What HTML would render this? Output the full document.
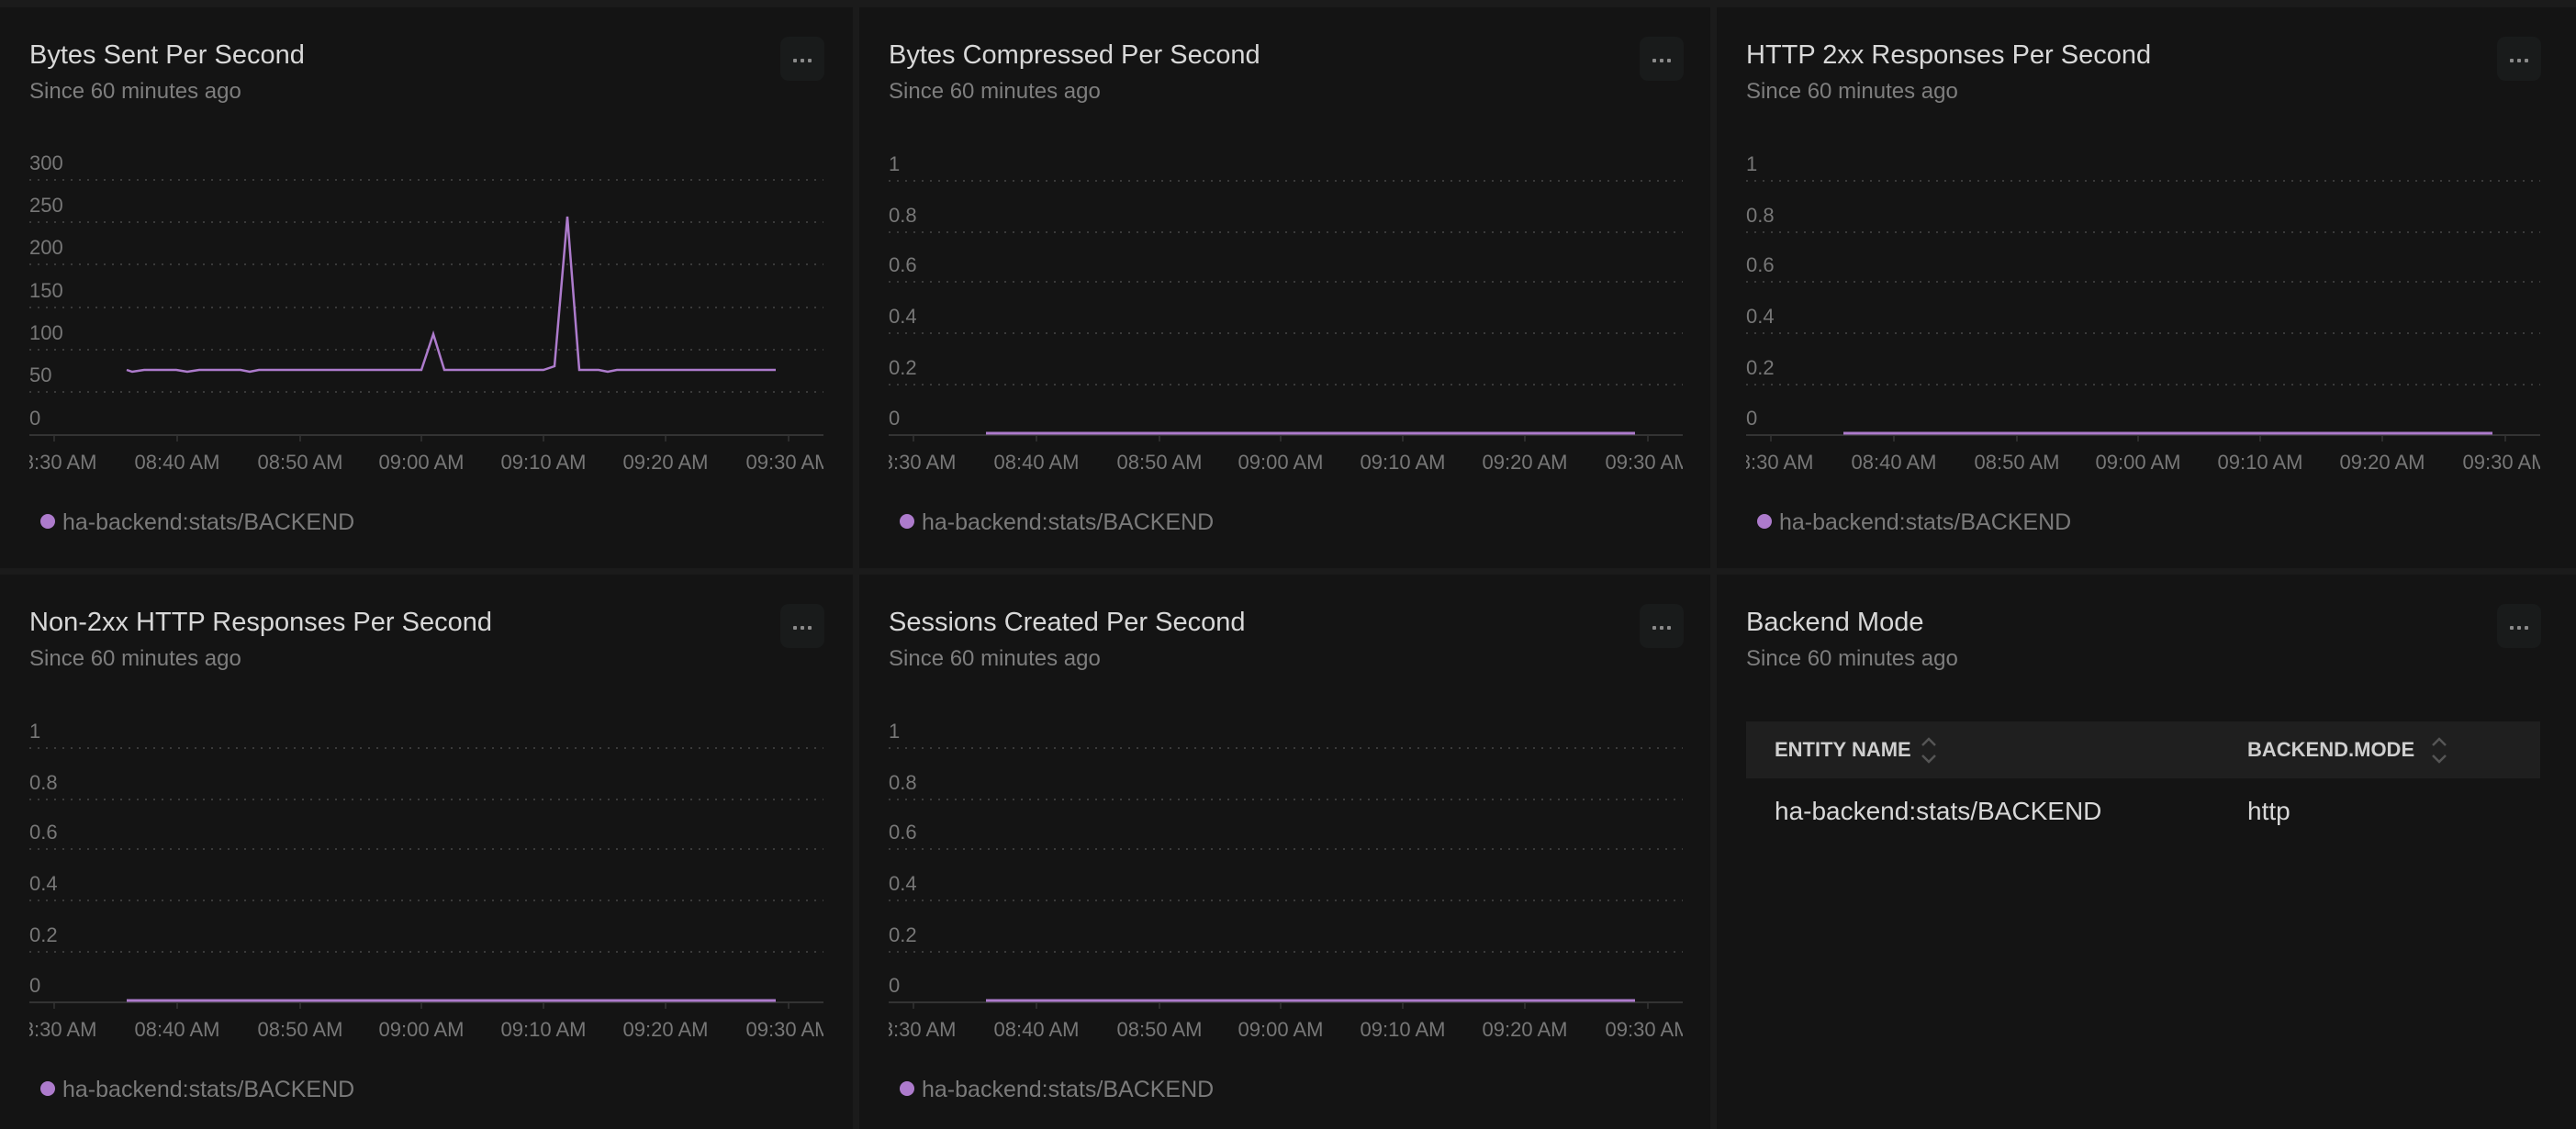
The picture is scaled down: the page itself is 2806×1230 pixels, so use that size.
<!DOCTYPE html>
<html><head><meta charset="utf-8"><style>
html,body{margin:0;padding:0;background:#1b1b1b;width:2806px;height:1230px;overflow:hidden;font-family:"Liberation Sans",sans-serif}
.p{position:absolute;background:#141414}
.t{position:absolute;left:32px;top:36px;font-size:29px;color:#d8d8d8;white-space:nowrap}
.s{position:absolute;left:32px;top:78px;font-size:24px;color:#7e7e7e;white-space:nowrap}
.m{position:absolute;left:850px;top:32px;width:48px;height:48px;border-radius:9px;background:#191b1b}
.m i{position:absolute;top:24px;width:4px;height:4px;background:#8a8a8a;border-radius:1px}
svg{position:absolute;left:0;top:0;overflow:hidden}
.lg{position:absolute;left:68px;top:547px;font-size:25px;color:#7a7a7a;white-space:nowrap}
.dot{position:absolute;left:44px;top:552px;width:16px;height:16px;border-radius:50%;background:#ad7bcc}
</style></head><body>

<div class="p" style="left:0;top:8px;width:929px;height:611px">
<div class="t">Bytes Sent Per Second</div><div class="s">Since 60 minutes ago</div>
<div class="m"><i style="left:14px"></i><i style="left:22px"></i><i style="left:30px"></i></div>
<svg width="929" height="611"><g transform="translate(32,0)">
<svg width="865" height="611"><g font-family="Liberation Sans" font-size="22" fill="#777">
<g stroke="#3a3a3a" stroke-width="2" stroke-dasharray="2 7"><line x1="0" x2="865" y1="188" y2="188"/><line x1="0" x2="865" y1="234" y2="234"/><line x1="0" x2="865" y1="280" y2="280"/><line x1="0" x2="865" y1="327" y2="327"/><line x1="0" x2="865" y1="373" y2="373"/><line x1="0" x2="865" y1="419" y2="419"/></g>
<line x1="0" x2="865" y1="466" y2="466" stroke="#333" stroke-width="2"/>
<g stroke="#2c2c2c" stroke-width="2"><line x1="27" x2="27" y1="467" y2="473"/><line x1="161" x2="161" y1="467" y2="473"/><line x1="295" x2="295" y1="467" y2="473"/><line x1="427" x2="427" y1="467" y2="473"/><line x1="560" x2="560" y1="467" y2="473"/><line x1="693" x2="693" y1="467" y2="473"/><line x1="827" x2="827" y1="467" y2="473"/></g>
<text x="0" y="177">300</text><text x="0" y="223">250</text><text x="0" y="269">200</text><text x="0" y="316">150</text><text x="0" y="362">100</text><text x="0" y="408">50</text><text x="0" y="455">0</text>
<g text-anchor="middle"><text x="27" y="503">08:30 AM</text><text x="161" y="503">08:40 AM</text><text x="295" y="503">08:50 AM</text><text x="427" y="503">09:00 AM</text><text x="560" y="503">09:10 AM</text><text x="693" y="503">09:20 AM</text><text x="827" y="503">09:30 AM</text></g>
<polyline fill="none" stroke="#ad7bcc" stroke-width="2.5" points="106,395 112,397 125,395 160,395 172,397 185,395 230,395 240,397 250,395 427,395 440,356 452,395 560,395 572,391 586,228 599,395 620,395 630,397 640,395 813,395"/>
</g></svg></g></svg>
<div class="dot"></div><div class="lg">ha-backend:stats/BACKEND</div>
</div>

<div class="p" style="left:936px;top:8px;width:927px;height:611px">
<div class="t">Bytes Compressed Per Second</div><div class="s">Since 60 minutes ago</div>
<div class="m"><i style="left:14px"></i><i style="left:22px"></i><i style="left:30px"></i></div>
<svg width="927" height="611"><g transform="translate(32,0)">
<svg width="865" height="611"><g font-family="Liberation Sans" font-size="22" fill="#777">
<g stroke="#3a3a3a" stroke-width="2" stroke-dasharray="2 7"><line x1="0" x2="865" y1="189" y2="189"/><line x1="0" x2="865" y1="245" y2="245"/><line x1="0" x2="865" y1="299" y2="299"/><line x1="0" x2="865" y1="355" y2="355"/><line x1="0" x2="865" y1="411" y2="411"/></g>
<line x1="0" x2="865" y1="466" y2="466" stroke="#333" stroke-width="2"/>
<g stroke="#2c2c2c" stroke-width="2"><line x1="27" x2="27" y1="467" y2="473"/><line x1="161" x2="161" y1="467" y2="473"/><line x1="295" x2="295" y1="467" y2="473"/><line x1="427" x2="427" y1="467" y2="473"/><line x1="560" x2="560" y1="467" y2="473"/><line x1="693" x2="693" y1="467" y2="473"/><line x1="827" x2="827" y1="467" y2="473"/></g>
<text x="0" y="178">1</text><text x="0" y="234">0.8</text><text x="0" y="288">0.6</text><text x="0" y="344">0.4</text><text x="0" y="400">0.2</text><text x="0" y="455">0</text>
<g text-anchor="middle"><text x="27" y="503">08:30 AM</text><text x="161" y="503">08:40 AM</text><text x="295" y="503">08:50 AM</text><text x="427" y="503">09:00 AM</text><text x="560" y="503">09:10 AM</text><text x="693" y="503">09:20 AM</text><text x="827" y="503">09:30 AM</text></g>
<line x1="106" x2="813" y1="464" y2="464" stroke="#ad7bcc" stroke-width="3"/>
</g></svg></g></svg>
<div class="dot"></div><div class="lg">ha-backend:stats/BACKEND</div>
</div>

<div class="p" style="left:1870px;top:8px;width:936px;height:611px">
<div class="t">HTTP 2xx Responses Per Second</div><div class="s">Since 60 minutes ago</div>
<div class="m"><i style="left:14px"></i><i style="left:22px"></i><i style="left:30px"></i></div>
<svg width="936" height="611"><g transform="translate(32,0)">
<svg width="865" height="611"><g font-family="Liberation Sans" font-size="22" fill="#777">
<g stroke="#3a3a3a" stroke-width="2" stroke-dasharray="2 7"><line x1="0" x2="865" y1="189" y2="189"/><line x1="0" x2="865" y1="245" y2="245"/><line x1="0" x2="865" y1="299" y2="299"/><line x1="0" x2="865" y1="355" y2="355"/><line x1="0" x2="865" y1="411" y2="411"/></g>
<line x1="0" x2="865" y1="466" y2="466" stroke="#333" stroke-width="2"/>
<g stroke="#2c2c2c" stroke-width="2"><line x1="27" x2="27" y1="467" y2="473"/><line x1="161" x2="161" y1="467" y2="473"/><line x1="295" x2="295" y1="467" y2="473"/><line x1="427" x2="427" y1="467" y2="473"/><line x1="560" x2="560" y1="467" y2="473"/><line x1="693" x2="693" y1="467" y2="473"/><line x1="827" x2="827" y1="467" y2="473"/></g>
<text x="0" y="178">1</text><text x="0" y="234">0.8</text><text x="0" y="288">0.6</text><text x="0" y="344">0.4</text><text x="0" y="400">0.2</text><text x="0" y="455">0</text>
<g text-anchor="middle"><text x="27" y="503">08:30 AM</text><text x="161" y="503">08:40 AM</text><text x="295" y="503">08:50 AM</text><text x="427" y="503">09:00 AM</text><text x="560" y="503">09:10 AM</text><text x="693" y="503">09:20 AM</text><text x="827" y="503">09:30 AM</text></g>
<line x1="106" x2="813" y1="464" y2="464" stroke="#ad7bcc" stroke-width="3"/>
</g></svg></g></svg>
<div class="dot"></div><div class="lg">ha-backend:stats/BACKEND</div>
</div>

<div class="p" style="left:0;top:626px;width:929px;height:604px">
<div class="t">Non-2xx HTTP Responses Per Second</div><div class="s">Since 60 minutes ago</div>
<div class="m"><i style="left:14px"></i><i style="left:22px"></i><i style="left:30px"></i></div>
<svg width="929" height="604"><g transform="translate(32,0)">
<svg width="865" height="604"><g font-family="Liberation Sans" font-size="22" fill="#777">
<g stroke="#3a3a3a" stroke-width="2" stroke-dasharray="2 7"><line x1="0" x2="865" y1="189" y2="189"/><line x1="0" x2="865" y1="245" y2="245"/><line x1="0" x2="865" y1="299" y2="299"/><line x1="0" x2="865" y1="355" y2="355"/><line x1="0" x2="865" y1="411" y2="411"/></g>
<line x1="0" x2="865" y1="466" y2="466" stroke="#333" stroke-width="2"/>
<g stroke="#2c2c2c" stroke-width="2"><line x1="27" x2="27" y1="467" y2="473"/><line x1="161" x2="161" y1="467" y2="473"/><line x1="295" x2="295" y1="467" y2="473"/><line x1="427" x2="427" y1="467" y2="473"/><line x1="560" x2="560" y1="467" y2="473"/><line x1="693" x2="693" y1="467" y2="473"/><line x1="827" x2="827" y1="467" y2="473"/></g>
<text x="0" y="178">1</text><text x="0" y="234">0.8</text><text x="0" y="288">0.6</text><text x="0" y="344">0.4</text><text x="0" y="400">0.2</text><text x="0" y="455">0</text>
<g text-anchor="middle"><text x="27" y="503">08:30 AM</text><text x="161" y="503">08:40 AM</text><text x="295" y="503">08:50 AM</text><text x="427" y="503">09:00 AM</text><text x="560" y="503">09:10 AM</text><text x="693" y="503">09:20 AM</text><text x="827" y="503">09:30 AM</text></g>
<line x1="106" x2="813" y1="464" y2="464" stroke="#ad7bcc" stroke-width="3"/>
</g></svg></g></svg>
<div class="dot"></div><div class="lg">ha-backend:stats/BACKEND</div>
</div>

<div class="p" style="left:936px;top:626px;width:927px;height:604px">
<div class="t">Sessions Created Per Second</div><div class="s">Since 60 minutes ago</div>
<div class="m"><i style="left:14px"></i><i style="left:22px"></i><i style="left:30px"></i></div>
<svg width="927" height="604"><g transform="translate(32,0)">
<svg width="865" height="604"><g font-family="Liberation Sans" font-size="22" fill="#777">
<g stroke="#3a3a3a" stroke-width="2" stroke-dasharray="2 7"><line x1="0" x2="865" y1="189" y2="189"/><line x1="0" x2="865" y1="245" y2="245"/><line x1="0" x2="865" y1="299" y2="299"/><line x1="0" x2="865" y1="355" y2="355"/><line x1="0" x2="865" y1="411" y2="411"/></g>
<line x1="0" x2="865" y1="466" y2="466" stroke="#333" stroke-width="2"/>
<g stroke="#2c2c2c" stroke-width="2"><line x1="27" x2="27" y1="467" y2="473"/><line x1="161" x2="161" y1="467" y2="473"/><line x1="295" x2="295" y1="467" y2="473"/><line x1="427" x2="427" y1="467" y2="473"/><line x1="560" x2="560" y1="467" y2="473"/><line x1="693" x2="693" y1="467" y2="473"/><line x1="827" x2="827" y1="467" y2="473"/></g>
<text x="0" y="178">1</text><text x="0" y="234">0.8</text><text x="0" y="288">0.6</text><text x="0" y="344">0.4</text><text x="0" y="400">0.2</text><text x="0" y="455">0</text>
<g text-anchor="middle"><text x="27" y="503">08:30 AM</text><text x="161" y="503">08:40 AM</text><text x="295" y="503">08:50 AM</text><text x="427" y="503">09:00 AM</text><text x="560" y="503">09:10 AM</text><text x="693" y="503">09:20 AM</text><text x="827" y="503">09:30 AM</text></g>
<line x1="106" x2="813" y1="464" y2="464" stroke="#ad7bcc" stroke-width="3"/>
</g></svg></g></svg>
<div class="dot"></div><div class="lg">ha-backend:stats/BACKEND</div>
</div>

<div class="p" style="left:1870px;top:626px;width:936px;height:604px">
<div class="t">Backend Mode</div><div class="s">Since 60 minutes ago</div>
<div class="m"><i style="left:14px"></i><i style="left:22px"></i><i style="left:30px"></i></div>
<div style="position:absolute;left:32px;top:160px;width:865px;height:62px;background:#1f1f1f"></div>
<div style="position:absolute;left:63px;top:178px;font-size:22px;font-weight:bold;color:#cfcfcf;white-space:nowrap">ENTITY NAME</div>
<div style="position:absolute;left:578px;top:178px;font-size:22px;font-weight:bold;color:#cfcfcf;white-space:nowrap">BACKEND.MODE</div>
<svg width="936" height="300" style="overflow:visible">
<g fill="none" stroke="#555" stroke-width="2.5">
<polyline points="224,186 231,179 238,186"/><polyline points="224,197 231,204 238,197"/>
<polyline points="780,186 787,179 794,186"/><polyline points="780,197 787,204 794,197"/>
</g></svg>
<div style="position:absolute;left:63px;top:242px;font-size:28px;color:#d8d8d8;white-space:nowrap">ha-backend:stats/BACKEND</div>
<div style="position:absolute;left:578px;top:242px;font-size:28px;color:#d8d8d8;white-space:nowrap">http</div>
</div>

</body></html>
